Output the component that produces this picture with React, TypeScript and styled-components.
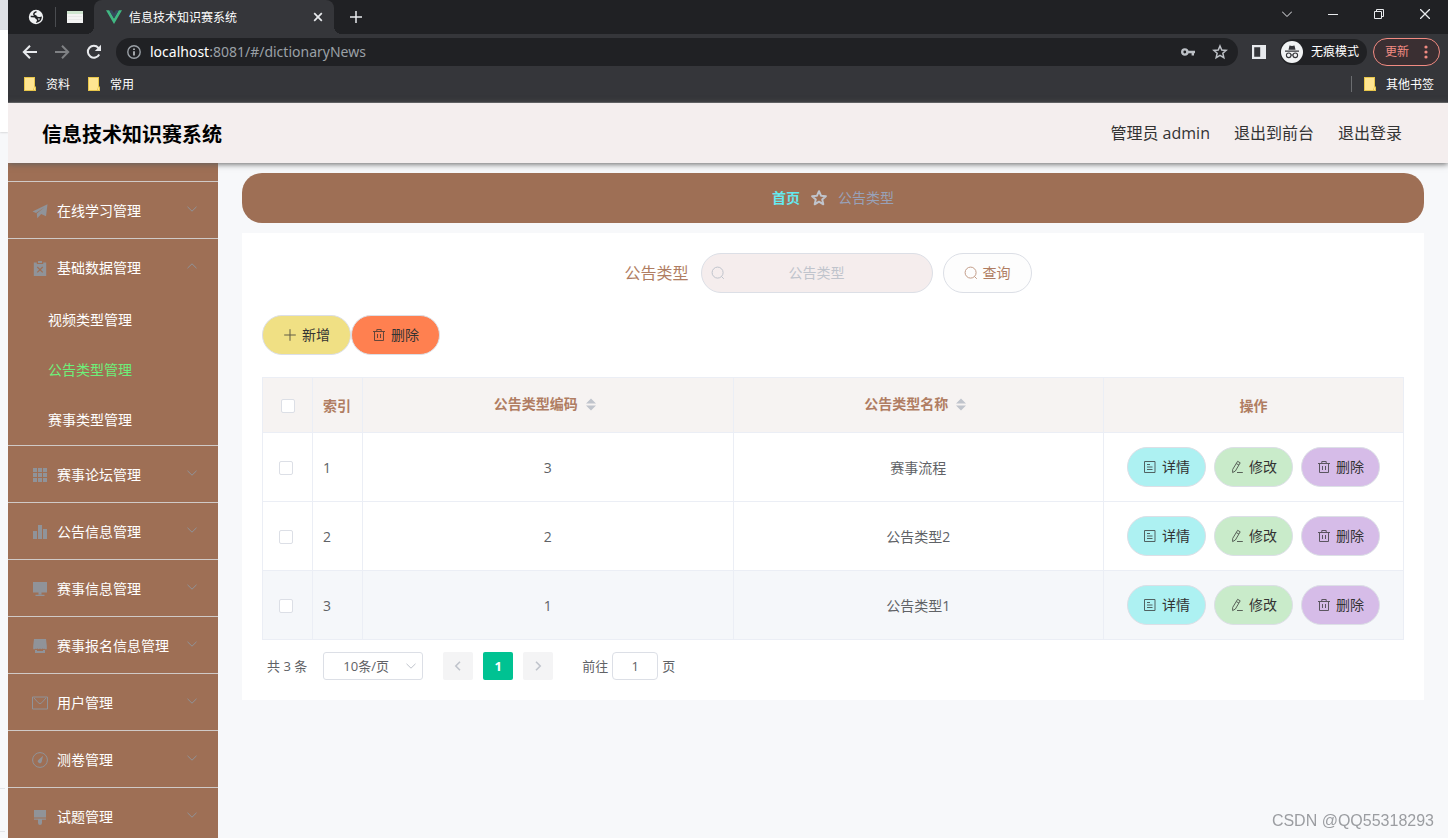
import React from "react";
import styled, { createGlobalStyle, css } from "styled-components";

const GlobalStyle = createGlobalStyle`
  *, *::before, *::after { box-sizing: border-box; }
  html, body { margin: 0; height: 100%; }
  body {
    font-family: "Open Sans", "Noto Sans CJK SC", sans-serif;
    font-size: 14px;
    color: #606266;
    background: #f7f8fa;
    overflow: hidden;
  }
  button, input, select { font: inherit; color: inherit; margin: 0; }
  button { cursor: pointer; }
  a { color: inherit; text-decoration: none; }
  ul, ol { list-style: none; margin: 0; padding: 0; }
  svg { display: block; flex: none; }
`;

/* ---------- Desktop frame ---------- */

const Desktop = styled.div`
  display: flex;
  height: 100vh;
`;

const WindowBehind = styled.div`
  flex: none;
  width: 8px;
  display: flex;
  flex-direction: column;
  background: #f7f8fa;
`;

const BehindTabs = styled.div`
  height: 30px;
  background: #dee1e6;
`;

const BehindBar = styled.div`
  flex: 1;
  max-height: 102px;
  background: #ffffff;
  box-shadow: 0 1px 2px rgba(0, 0, 0, 0.12);
`;

const BehindLines = styled.div`
  margin-top: auto;
  width: 5px;
  height: 44px;
  margin-bottom: 6px;
  border-top: 1px solid #e2e4e8;
  border-bottom: 1px solid #e2e4e8;
`;

const BrowserWindow = styled.div`
  flex: 1;
  min-width: 0;
  display: flex;
  flex-direction: column;
  overflow: hidden;
`;

/* ---------- Browser chrome ---------- */

const IconButton = styled.button<{ $w?: number }>`
  flex: none;
  display: flex;
  align-items: center;
  justify-content: center;
  width: ${(p) => p.$w ?? 32}px;
  height: 28px;
  padding: 0;
  border: 0;
  background: none;
  color: #e8eaed;
`;

const TabStrip = styled.div`
  flex: none;
  display: flex;
  height: 34px;
  padding-left: 12px;
  background: #202124;
  color: #e8eaed;
  font-size: 12px;
`;

const PinnedTab = styled.button`
  display: flex;
  align-items: center;
  justify-content: center;
  width: 32px;
  padding: 0;
  border: 0;
  background: none;
`;

const TabDivider = styled.span`
  align-self: center;
  width: 1px;
  height: 20px;
  margin: 0 3px;
  background: #4a4c50;
`;

const ActiveTab = styled.div`
  position: relative;
  display: flex;
  align-items: center;
  width: 240px;
  margin-left: 3px;
  padding: 0 6px 0 12px;
  border-radius: 8px 8px 0 0;
  background: #35363a;

  &::before,
  &::after {
    content: "";
    position: absolute;
    bottom: 0;
    width: 8px;
    height: 8px;
  }
  &::before {
    left: -8px;
    background: radial-gradient(circle at 0 0, transparent 8px, #35363a 8px);
  }
  &::after {
    right: -8px;
    background: radial-gradient(circle at 100% 0, transparent 8px, #35363a 8px);
  }
`;

const TabTitle = styled.span`
  flex: 1;
  padding: 2px 0 0 7px;
  line-height: 18px;
  color: #ffffff;
`;

const NewTab = styled(IconButton)`
  margin-left: 8px;
  align-self: center;
`;

const WindowControls = styled.div`
  display: flex;
  margin-left: auto;
`;

const Toolbar = styled.div`
  flex: none;
  display: flex;
  align-items: center;
  height: 36px;
  padding: 0 8px 0 6px;
  background: #35363a;
  color: #e8eaed;
`;

const AddressBar = styled.div`
  flex: 1;
  display: flex;
  align-items: center;
  height: 28px;
  margin-left: 6px;
  padding: 0 2px 0 11px;
  border-radius: 14px;
  background: #202124;
`;

const Url = styled.a`
  flex: 1;
  padding-left: 9px;
  font-family: "Noto Sans", sans-serif;
  font-size: 14px;
  line-height: 20px;
  color: #9aa0a6;

  b {
    font-weight: 400;
    color: #ffffff;
  }
`;

const Incognito = styled.button`
  display: flex;
  align-items: center;
  gap: 8px;
  height: 26px;
  margin-right: 6px;
  padding: 0 8px 0 1px;
  border: 0;
  border-radius: 13px;
  background: #202124;
  color: #ffffff;
  font-size: 12px;
  line-height: 18px;
`;

const UpdateButton = styled.button`
  display: flex;
  align-items: center;
  gap: 15px;
  height: 28px;
  padding: 0 11px;
  border: 1px solid #f28b82;
  border-radius: 14px;
  background: #3a2f32;
  color: #f28b82;
  font-size: 12px;
  line-height: 18px;
`;

const BookmarkBar = styled.nav`
  flex: none;
  display: flex;
  align-items: center;
  height: 33px;
  padding: 0 14px 4px 16px;
  border-bottom: 1px solid #5f6063;
  background: #35363a;
  color: #ffffff;
  font-size: 12px;
`;

const Bookmark = styled.a`
  display: flex;
  align-items: center;
  gap: 10px;
  margin-right: 18px;
  line-height: 18px;

  span {
    padding-top: 2px;
  }
  &:last-child {
    margin: 0 0 0 12px;
  }
`;

const BookmarkDivider = styled.span`
  width: 1px;
  height: 16px;
  margin-left: auto;
  background: #6b6d70;
`;

/* ---------- Application header ---------- */

const AppHeader = styled.header`
  position: relative;
  z-index: 1;
  flex: none;
  display: flex;
  align-items: center;
  height: 60px;
  padding: 0 46px 0 34px;
  background: #f4eeee;
  box-shadow: 0 1px 6px #606060;
`;

const AppTitle = styled.h1`
  margin: 0;
  padding-top: 4px;
  font-size: 20px;
  line-height: 30px;
  font-weight: 700;
  color: #000000;
`;

const UserLinks = styled.nav`
  display: flex;
  gap: 24px;
  margin-left: auto;
  font-size: 16px;
  line-height: 24px;
  color: #333333;
`;

const AppBody = styled.div`
  flex: 1;
  min-height: 0;
  display: flex;
`;

/* ---------- Sidebar ---------- */

const Sidebar = styled.nav`
  flex: none;
  width: 210px;
  overflow: hidden;
  background: #9e6f55;
  color: #ffffff;
`;

const MenuGroup = styled.li`
  border-bottom: 1px solid #d0cac7;
`;

const MenuTail = styled.li`
  height: 19px;
  border-bottom: 1px solid #d0cac7;
`;

const MenuButton = styled.button`
  display: flex;
  align-items: center;
  width: 100%;
  height: 56px;
  padding: 2px 20px 0;
  border: 0;
  background: none;
  color: #909399;
  text-align: left;
`;

const MenuIcon = styled.span`
  display: flex;
  justify-content: center;
  width: 24px;
  margin-right: 5px;
`;

const MenuLabel = styled.span`
  flex: 1;
  line-height: 20px;
  color: #ffffff;
  white-space: nowrap;
`;

const MenuArrow = styled.span`
  padding-bottom: 5px;
`;

const SubLink = styled.a<{ $active?: boolean }>`
  display: block;
  height: 50px;
  padding-left: 40px;
  line-height: 50px;
  color: ${(p) => (p.$active ? "#6df07a" : "#ffffff")};
`;

/* ---------- Main area ---------- */

const Main = styled.main`
  flex: 1;
  min-width: 0;
  padding: 10px 24px;
  background: #f7f8fa;
`;

const Breadcrumb = styled.ol`
  display: flex;
  align-items: center;
  justify-content: center;
  gap: 10px;
  height: 50px;
  border-radius: 20px;
  background: #9e6f55;
  color: #98a1b8;
  line-height: 20px;

  a {
    font-weight: 700;
    color: #65e9ef;
  }
`;

const Card = styled.section`
  margin-top: 10px;
  padding: 20px;
  background: #ffffff;
`;

const SearchForm = styled.form`
  display: flex;
  align-items: center;
  justify-content: center;
  padding-right: 10px;
`;

const SearchLabel = styled.label`
  padding-right: 12px;
  font-size: 16px;
  line-height: 24px;
  color: #b07d62;
`;

const SearchField = styled.div`
  display: flex;
  align-items: center;
  width: 232px;
  height: 40px;
  margin-right: 10px;
  padding: 0 9px;
  border: 1px solid #dcdfe6;
  border-radius: 20px;
  background: #f5eded;
  color: #c0c4cc;

  input {
    flex: 1;
    min-width: 0;
    padding: 0 14px 0 0;
    border: 0;
    outline: 0;
    background: none;
    text-align: center;
    line-height: 20px;
  }
  input::placeholder {
    color: #c0c4cc;
    opacity: 1;
  }
`;

const tones = {
  plain: css`background: #fdfdfd; color: #b07d62;`,
  yellow: css`background: #f0e084; color: #333333;`,
  coral: css`background: #ff8050; color: #333333;`,
  aqua: css`background: #adf1f2; color: #333333;`,
  green: css`background: #c9ebca; color: #333333;`,
  violet: css`background: #d6bce8; color: #333333;`,
};

const PillButton = styled.button<{ $tone: keyof typeof tones; $compact?: boolean }>`
  display: inline-flex;
  align-items: center;
  gap: 5px;
  height: 40px;
  padding: 0 ${(p) => (p.$compact ? 15 : 20)}px;
  border: 1px solid #dcdfe6;
  border-radius: 20px;
  line-height: 20px;
  white-space: nowrap;
  ${(p) => tones[p.$tone]}

  svg {
    opacity: 0.75;
  }
`;

const TableActions = styled.div`
  display: flex;
  margin: 22px 0;
`;

const DataTable = styled.table`
  width: 100%;
  table-layout: fixed;
  border-collapse: separate;
  border-spacing: 0;
  border: 1px solid #ebeef5;
  border-width: 1px 0 0 1px;
  line-height: 20px;
`;

const Col = styled.col<{ $w?: number }>`
  width: ${(p) => (p.$w ? `${p.$w}px` : "auto")};
`;

type CellProps = { $align?: "left" | "center"; $pad?: number };

const cell = css<CellProps>`
  padding: 2px ${(p) => p.$pad ?? 0}px 0;
  border: 1px solid #ebeef5;
  border-width: 0 1px 1px 0;
  text-align: ${(p) => p.$align ?? "center"};
  vertical-align: middle;
`;

const HeadCell = styled.th<CellProps>`
  ${cell}
  height: 55px;
  background: #f6f3f2;
  color: #b07d62;
  font-weight: 700;
`;

const Cell = styled.td<CellProps>`
  ${cell}
  height: 69px;

  &:last-child {
    padding: 0;
  }
`;

const Row = styled.tr<{ $hovered?: boolean }>`
  background: ${(p) => (p.$hovered ? "#f5f7fa" : "#ffffff")};
`;

const SortLabel = styled.span`
  display: flex;
  align-items: center;
  justify-content: center;
  gap: 8px;
  padding: 0 6px 4px 0;
`;

const Checkbox = styled.input.attrs({ type: "checkbox" })`
  appearance: none;
  display: block;
  width: 14px;
  height: 14px;
  border: 1px solid #dcdfe6;
  border-radius: 2px;
  background: #ffffff;

  th & {
    margin: 0 auto;
  }
`;

const RowActions = styled.div`
  display: flex;
  justify-content: center;
  gap: 8px;
`;

const Pagination = styled.div`
  display: flex;
  align-items: center;
  height: 28px;
  margin-top: 12px;
  padding-left: 5px;
  font-size: 13px;
  line-height: 20px;
`;

const SizeSelect = styled.div`
  position: relative;
  width: 100px;
  margin: 0 20px 0 16px;

  select {
    appearance: none;
    display: block;
    width: 100%;
    height: 28px;
    padding: 0 24px 0 10px;
    border: 1px solid #dcdfe6;
    border-radius: 3px;
    background: #ffffff;
    text-align-last: center;
  }
  svg {
    position: absolute;
    right: 6px;
    top: 8px;
    pointer-events: none;
    color: #c0c4cc;
  }
`;

const PageButton = styled.button<{ $current?: boolean }>`
  display: flex;
  align-items: center;
  justify-content: center;
  width: 30px;
  height: 28px;
  margin-right: 10px;
  padding: 0;
  border: 0;
  border-radius: 2px;
  font-weight: 700;
  background: ${(p) => (p.$current ? "#00c292" : "#f4f4f5")};
  color: ${(p) => (p.$current ? "#ffffff" : "#c0c4cc")};
`;

const Jumper = styled.label`
  display: flex;
  align-items: center;
  gap: 4px;
  margin-left: 19px;

  input {
    width: 46px;
    height: 28px;
    padding: 0;
    border: 1px solid #dcdfe6;
    border-radius: 4px;
    text-align: center;
  }
`;

const Watermark = styled.div`
  position: fixed;
  right: 14px;
  bottom: 7px;
  font-family: "Liberation Sans", sans-serif;
  font-size: 16px;
  line-height: 20px;
  color: #9b9da1;
`;

/* ---------- Icons ---------- */

type IconProps = { size?: number; sw?: number; children: React.ReactNode; box?: string };

const Icon = ({ size = 14, sw = 1, box, children }: IconProps) => (
  <svg
    width={size}
    height={size}
    viewBox={box ?? `0 0 ${size} ${size}`}
    fill="none"
    stroke="currentColor"
    strokeWidth={sw}
    aria-hidden="true"
  >
    {children}
  </svg>
);

const Chevron = ({ up }: { up?: boolean }) => (
  <Icon size={12}>
    <path d={up ? "M1.5 8.2 6 3.8l4.5 4.4" : "M1.5 3.8 6 8.2l4.5-4.4"} />
  </Icon>
);

const SearchIcon = () => (
  <Icon>
    <circle cx="6.6" cy="6.6" r="5.5" />
    <path d="m10.4 10.4 2.4 2.4" />
  </Icon>
);

const PlusIcon = () => (
  <Icon>
    <path d="M7 1.2v11.6M1.2 7h11.6" />
  </Icon>
);

const TrashIcon = () => (
  <Icon>
    <path d="M1 3.5h12M2.5 3.5v9h9v-9M4.8 3.5V1.5h4.4v2M5.5 6v4M8.5 6v4" />
  </Icon>
);

const DocIcon = () => (
  <Icon>
    <path d="M1.5 1.500h10.500v11H1.500zM4 4.500h3M4 7h5.500M4 9.500h5.500" />
  </Icon>
);

const EditIcon = () => (
  <Icon>
    <path d="M7.600 1.300 10.200 2.800 5.400 11 2.600 12.600l.1-3.200zM6.300 3.600 8.900 5M7 12.500h5.800" />
  </Icon>
);

const SortIcon = () => (
  <svg width="10" height="13" viewBox="0 0 10 13" aria-hidden="true">
    <path d="M0 5.4 5 .4l5 5zM0 7.6l5 5 5-5z" fill="#c0c4cc" />
  </svg>
);

const StarPath = "m8 1.2 2 4.5 4.9.5-3.7 3.2 1.1 4.9L8 11.7l-4.3 2.6 1.1-4.9L1.1 6.2 6 5.7z";

const FolderIcon = () => (
  <svg width="12" height="14" viewBox="0 0 12 14" aria-hidden="true">
    <path d="M0 0h11v9.5h1V14H0z" fill="#e8c64a" />
    <path d="M1 1h9v9l-1 3H1z" fill="#ffe591" />
    <path d="M10 10.5h1V13h-1z" fill="#ffe591" />
  </svg>
);

const menuIcons: Record<string, React.ReactNode> = {
  plane: (
    <path d="M-.5 7.500 14.500.300 13 12.200 8.200 10.100 4.300 14.300 3.800 9.600 11.500 3.200 3 9z" fill="currentColor" stroke="none" />
  ),
  clipboard: (
    <>
      <path d="M.8 1.500h3V3h6.400V1.500h3V15H.8zM5 0h4v2H5z" fill="currentColor" stroke="none" />
      <path d="m4.300 6 5.400 5.400M9.700 6l-5.400 5.400" stroke="#9e6f55" strokeWidth={1.2} />
    </>
  ),
  grid: (
    <path
      d="M0 0h4v4H0zM5 0h4v4H5zM10 0h4v4h-4zM0 5h4v4H0zM5 5h4v4H5zM10 5h4v4h-4zM0 10h4v4H0zM5 10h4v4H5zM10 10h4v4h-4z"
      fill="currentColor"
      stroke="none"
    />
  ),
  bars: <path d="M0 6h4v8H0zM5 0h4v14H5zM10 4h4v10h-4z" fill="currentColor" stroke="none" />,
  monitor: (
    <path d="M0 0h14v10.500H0zM5.500 10.500h3v2h-3zM2.500 12.700h9V14h-9z" fill="currentColor" stroke="none" />
  ),
  shop: (
    <path
      d="M1 0h12l.8 7v3.200H12V9.500L11 10.300 9.600 9.500 8.300 10.300 7 9.500l-1.300.8-1.300-.8-1.400.8-1-.8v.7H.2V7zM2 11h2v1h6v-1h2v3H2z"
      fill="currentColor"
      stroke="none"
    />
  ),
  mail: <path d="M-.5 1h15v12h-15zM1 2l4.200 4.700a2.400 2.400 0 0 0 3.600 0L13 2" />,
  gauge: (
    <>
      <circle cx="7" cy="7" r="7.400" />
      <path d="M10 2.800 8.800 8.600a2 2 0 1 1-3.500-1.700z" fill="currentColor" stroke="none" />
    </>
  ),
  brush: (
    <path
      d="M1 0h12v7.600H1zM1 8.400h12v1.400H9V13a1.500 1.500 0 0 1-4 0V9.800H1z"
      fill="currentColor"
      stroke="none"
    />
  ),
};

/* ---------- Data ---------- */

type Menu = { icon: string; label: string; children?: string[] };

const menus: Menu[] = [
  { icon: "plane", label: "在线学习管理" },
  { icon: "clipboard", label: "基础数据管理", children: ["视频类型管理", "公告类型管理", "赛事类型管理"] },
  { icon: "grid", label: "赛事论坛管理" },
  { icon: "bars", label: "公告信息管理" },
  { icon: "monitor", label: "赛事信息管理" },
  { icon: "shop", label: "赛事报名信息管理" },
  { icon: "mail", label: "用户管理" },
  { icon: "gauge", label: "测卷管理" },
  { icon: "brush", label: "试题管理" },
];

const rows = [
  { index: 1, code: "3", name: "赛事流程" },
  { index: 2, code: "2", name: "公告类型2" },
  { index: 3, code: "1", name: "公告类型1", hovered: true },
];

/* ---------- Sections ---------- */

const BrowserChrome = () => (
  <>
    <TabStrip>
      <PinnedTab aria-label="固定标签页 1">
        <Icon size={16}>
          <circle cx="8" cy="8" r="7.200" fill="#f1f3f4" stroke="none" />
          <path
            d="M8.500 2.800c-1.600.2-3 1.600-2.600 2.800.5 1.200 2 .8 2.500 2 .5 1 2.500 1.400 4.600.9-.2 2-1.600 3.800-3.800 4.400.8-1.600 1-2.500-.3-3-1.400-.6-.8-2-2.200-2.200-1.300-.2-2.800-.3-4-.2"
            stroke="#202124"
            strokeWidth={1.500}
          />
        </Icon>
      </PinnedTab>
      <TabDivider />
      <PinnedTab aria-label="固定标签页 2">
        <Icon size={16}>
          <path d="M0 2h16v12H0z" fill="#f4f4f4" stroke="none" />
          <path d="M0 2h16v3H0z" fill="#cfe6d0" stroke="none" />
          <path d="M1 7.500h14M1 10.500h14" stroke="#e0e0e0" strokeWidth={0.6} />
        </Icon>
      </PinnedTab>
      <ActiveTab>
        <Icon size={16}>
          <path d="M0 1.200h3.200L8 9.500l4.800-8.300H16L8 15z" fill="#41b883" stroke="none" />
          <path d="M3.200 1.200H6.100L8 4.500l1.900-3.300h2.900L8 9.500z" fill="#35495e" stroke="none" />
        </Icon>
        <TabTitle>信息技术知识赛系统</TabTitle>
        <IconButton $w={20} aria-label="关闭标签页">
          <Icon size={10} sw={1.7}>
            <path d="m1.200 1.200 7.600 7.600M8.800 1.200 1.200 8.800" />
          </Icon>
        </IconButton>
      </ActiveTab>
      <NewTab $w={28} aria-label="新建标签页">
        <Icon size={12} sw={1.500}>
          <path d="M6 0v12M0 6h12" />
        </Icon>
      </NewTab>
      <WindowControls>
        <IconButton $w={46} aria-label="搜索标签页">
          <Icon size={10}><path d="m0 2.500 5 5 5-5" /></Icon>
        </IconButton>
        <IconButton $w={46} aria-label="最小化">
          <Icon size={10}><path d="M0 5.500h10" /></Icon>
        </IconButton>
        <IconButton $w={46} aria-label="还原">
          <Icon size={10}><path d="M.5 2.500h7v7h-7zM2.500 2.500v-2h7v7h-2" /></Icon>
        </IconButton>
        <IconButton $w={46} aria-label="关闭">
          <Icon size={10} sw={1.3}><path d="m0 0 10 10M10 0 0 10" /></Icon>
        </IconButton>
      </WindowControls>
    </TabStrip>

    <Toolbar>
      <IconButton aria-label="后退">
        <Icon size={16} sw={2}><path d="M15 8H2M8 1.700 1.800 8 8 14.300" /></Icon>
      </IconButton>
      <IconButton aria-label="前进">
        <Icon size={16} sw={2}><path d="M1 8h13M8 1.700 14.200 8 8 14.300" stroke="#7f8184" /></Icon>
      </IconButton>
      <IconButton aria-label="重新加载">
        <Icon size={16} sw={2}>
          <path d="M13.200 10.500A6 6 0 1 1 12.400 3.800l1.200 1.400" />
          <path d="M15 .8v6.200H8.800z" fill="currentColor" stroke="none" />
        </Icon>
      </IconButton>
      <AddressBar>
        <Icon size={14} sw={1.400}>
          <circle cx="7" cy="7" r="6.200" stroke="#9aa0a6" />
          <path d="M7 6.200v4.300M7 3.400v1.500" stroke="#c4c7cb" strokeWidth={1.600} />
        </Icon>
        <Url href="#/dictionaryNews">
          <b>localhost</b>:8081/#/dictionaryNews
        </Url>
        <IconButton aria-label="密码">
          <Icon size={14}>
            <circle cx="3.800" cy="7" r="2.600" stroke="#bdc1c6" strokeWidth={2.400} />
            <path d="M6.500 7H14M11.800 7v3.400" stroke="#bdc1c6" strokeWidth={2.400} />
          </Icon>
        </IconButton>
        <IconButton aria-label="为此网页添加书签">
          <Icon size={16} sw={1.400} box="-1 -1 18 18"><path d={StarPath} stroke="#bdc1c6" strokeWidth={1.700} /></Icon>
        </IconButton>
      </AddressBar>
      <IconButton $w={42} aria-label="侧边栏">
        <Icon size={14}>
          <path d="M0 0h14v14H0zM2.200 2.200v9.600h6V2.200z" fill="currentColor" fillRule="evenodd" stroke="none" />
        </Icon>
      </IconButton>
      <Incognito>
        <Icon size={22}>
          <circle cx="11" cy="11" r="11" fill="#f1f3f4" stroke="none" />
          <path d="m7.500 8.800 1-4.300L11 5l2.500-.5 1 4.300zM4 9.500h14v1.200H4z" fill="#35363a" stroke="none" />
          <circle cx="7.700" cy="14.300" r="2.300" stroke="#35363a" strokeWidth={1.100} />
          <circle cx="14.300" cy="14.300" r="2.300" stroke="#35363a" strokeWidth={1.100} />
          <path d="M10 14h2" stroke="#35363a" />
        </Icon>
        无痕模式
      </Incognito>
      <UpdateButton>
        更新
        <svg width="4" height="14" viewBox="0 0 4 14" fill="currentColor" aria-hidden="true">
          <circle cx="2" cy="2" r="1.600" />
          <circle cx="2" cy="7" r="1.600" />
          <circle cx="2" cy="12" r="1.600" />
        </svg>
      </UpdateButton>
    </Toolbar>

    <BookmarkBar>
      <Bookmark href="#"><FolderIcon /><span>资料</span></Bookmark>
      <Bookmark href="#"><FolderIcon /><span>常用</span></Bookmark>
      <BookmarkDivider />
      <Bookmark href="#"><FolderIcon /><span>其他书签</span></Bookmark>
    </BookmarkBar>
  </>
);

const SideMenu = () => (
  <Sidebar>
    <ul>
      <MenuTail />
      {menus.map((m) => (
        <MenuGroup key={m.label}>
          <MenuButton aria-expanded={!!m.children}>
            <MenuIcon>
              <Icon size={16} box="-1 -1 16 16">{menuIcons[m.icon]}</Icon>
            </MenuIcon>
            <MenuLabel>{m.label}</MenuLabel>
            <MenuArrow><Chevron up={!!m.children} /></MenuArrow>
          </MenuButton>
          {m.children?.map((c) => (
            <SubLink key={c} href="#" $active={c === "公告类型管理"}>{c}</SubLink>
          ))}
        </MenuGroup>
      ))}
    </ul>
  </Sidebar>
);

const NoticeTable = () => (
  <DataTable>
    <colgroup>
      <Col $w={50} />
      <Col $w={50} />
      <Col />
      <Col />
      <Col $w={300} />
    </colgroup>
    <thead>
      <tr>
        <HeadCell><Checkbox aria-label="全选" /></HeadCell>
        <HeadCell $align="left" $pad={10}>索引</HeadCell>
        <HeadCell><SortLabel>公告类型编码<SortIcon /></SortLabel></HeadCell>
        <HeadCell><SortLabel>公告类型名称<SortIcon /></SortLabel></HeadCell>
        <HeadCell>操作</HeadCell>
      </tr>
    </thead>
    <tbody>
      {rows.map((r) => (
        <Row key={r.index} $hovered={r.hovered}>
          <Cell $align="left" $pad={16}><Checkbox aria-label={`选择第 ${r.index} 行`} /></Cell>
          <Cell $align="left" $pad={10}>{r.index}</Cell>
          <Cell>{r.code}</Cell>
          <Cell>{r.name}</Cell>
          <Cell>
            <RowActions>
              <PillButton $tone="aqua" $compact><DocIcon />详情</PillButton>
              <PillButton $tone="green" $compact><EditIcon />修改</PillButton>
              <PillButton $tone="violet" $compact><TrashIcon />删除</PillButton>
            </RowActions>
          </Cell>
        </Row>
      ))}
    </tbody>
  </DataTable>
);

export default function App() {
  return (
    <>
      <GlobalStyle />
      <Desktop>
        <WindowBehind>
          <BehindTabs />
          <BehindBar />
          <BehindLines />
        </WindowBehind>
        <BrowserWindow>
          <BrowserChrome />
          <AppHeader>
            <AppTitle>信息技术知识赛系统</AppTitle>
            <UserLinks>
              <span>管理员 admin</span>
              <a href="#">退出到前台</a>
              <a href="#">退出登录</a>
            </UserLinks>
          </AppHeader>
          <AppBody>
            <SideMenu />
            <Main>
              <Breadcrumb>
                <li><a href="#">首页</a></li>
                <li aria-hidden="true">
                  <Icon size={18} sw={2} box="-1 -1 18 18">
                    <path d={StarPath} stroke="#c0c4cc" strokeLinejoin="round" />
                  </Icon>
                </li>
                <li>公告类型</li>
              </Breadcrumb>
              <Card>
                <SearchForm onSubmit={(e) => e.preventDefault()}>
                  <SearchLabel htmlFor="notice-type">公告类型</SearchLabel>
                  <SearchField>
                    <SearchIcon />
                    <input id="notice-type" type="text" placeholder="公告类型" />
                  </SearchField>
                  <PillButton $tone="plain" type="submit"><SearchIcon />查询</PillButton>
                </SearchForm>
                <TableActions>
                  <PillButton $tone="yellow"><PlusIcon />新增</PillButton>
                  <PillButton $tone="coral"><TrashIcon />删除</PillButton>
                </TableActions>
                <NoticeTable />
                <Pagination>
                  <span>共 3 条</span>
                  <SizeSelect>
                    <select aria-label="每页条数" defaultValue="10">
                      <option value="10">10条/页</option>
                      <option value="20">20条/页</option>
                    </select>
                    <Chevron />
                  </SizeSelect>
                  <PageButton aria-label="上一页">
                    <Icon size={12} sw={1.600}><path d="M8 1.800 3.800 6 8 10.200" /></Icon>
                  </PageButton>
                  <PageButton $current>1</PageButton>
                  <PageButton aria-label="下一页">
                    <Icon size={12} sw={1.600}><path d="M4 1.800 8.200 6 4 10.200" /></Icon>
                  </PageButton>
                  <Jumper>
                    前往
                    <input type="text" defaultValue="1" />
                    页
                  </Jumper>
                </Pagination>
              </Card>
            </Main>
          </AppBody>
        </BrowserWindow>
      </Desktop>
      <Watermark>CSDN @QQ55318293</Watermark>
    </>
  );
}
